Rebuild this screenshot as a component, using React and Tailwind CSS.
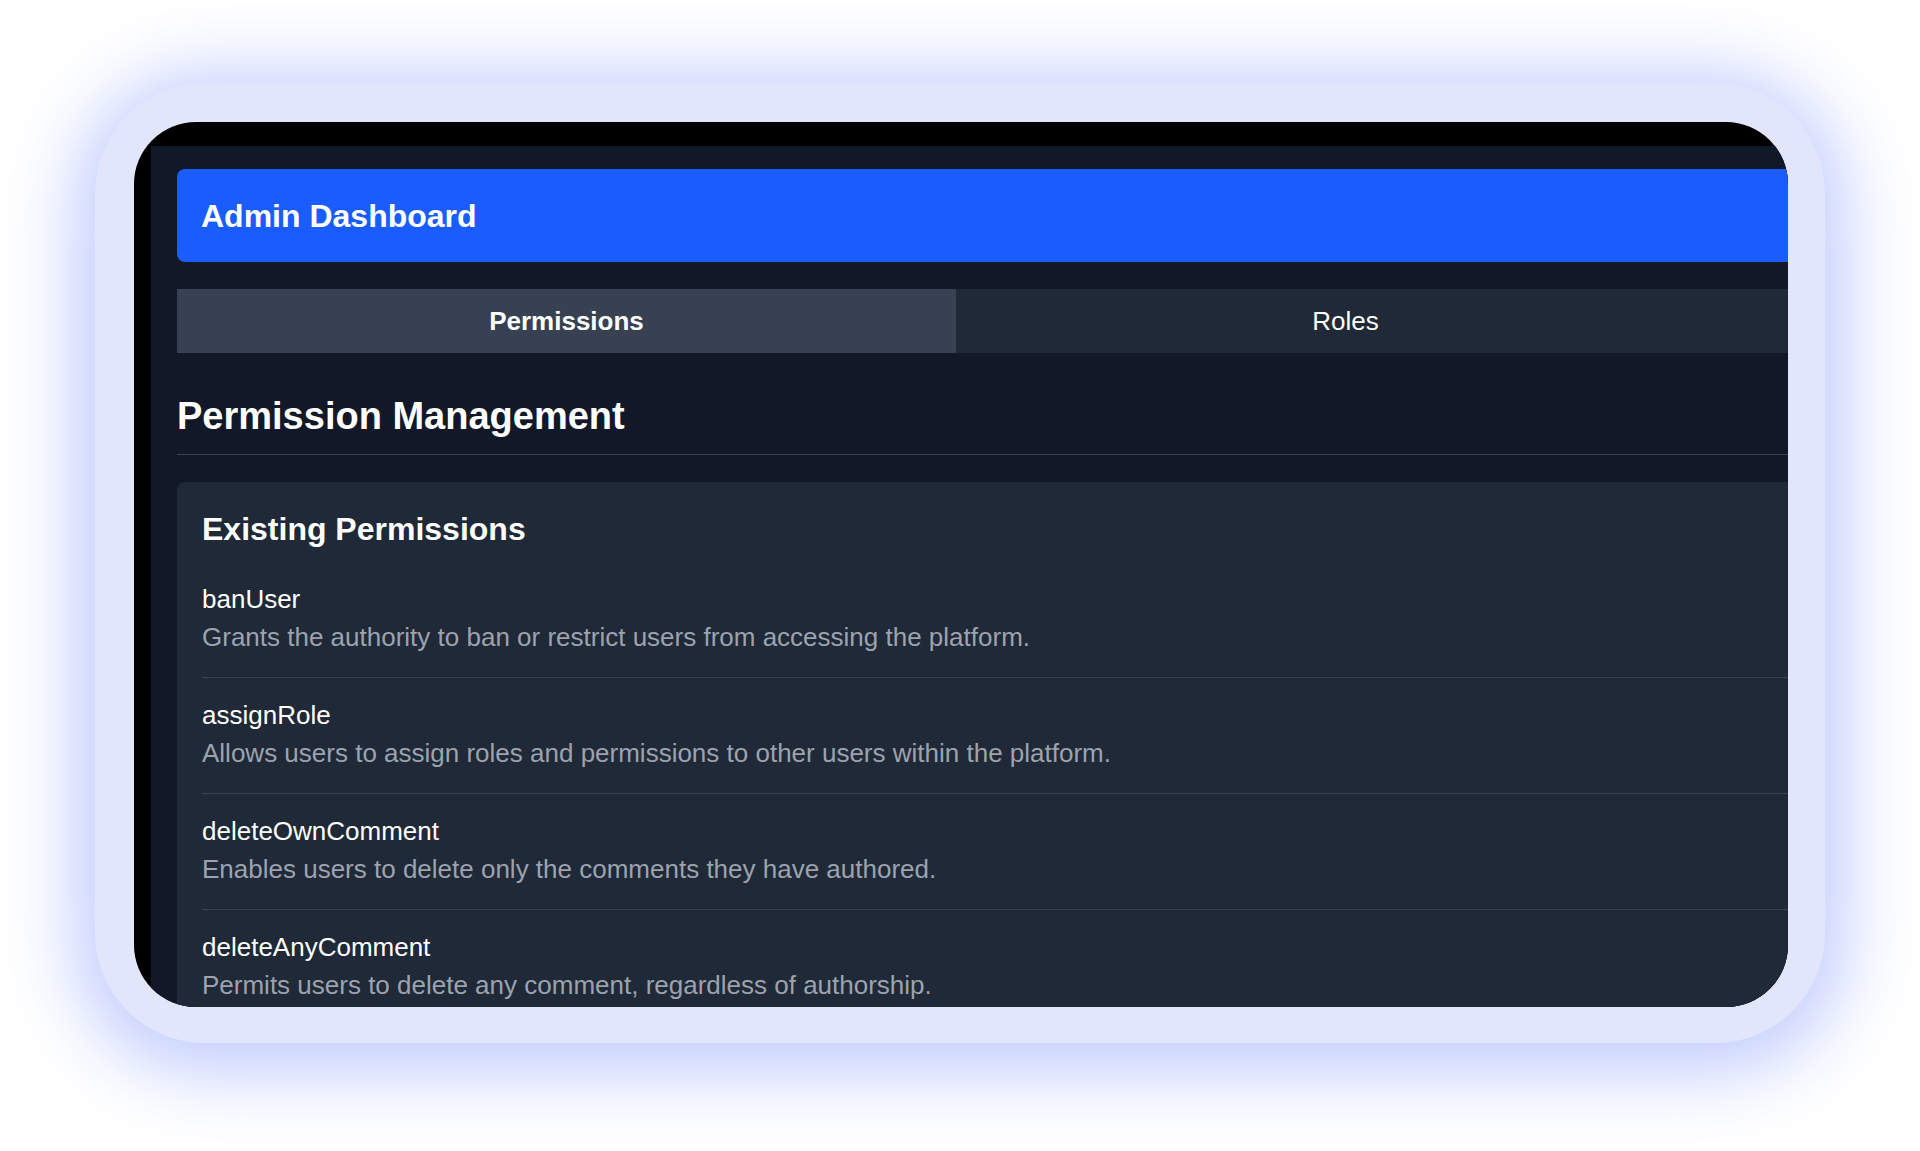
const perms = [
  ["banUser", "Grants the authority to ban or restrict users from accessing the platform."],
  ["assignRole", "Allows users to assign roles and permissions to other users within the platform."],
  ["deleteOwnComment", "Enables users to delete only the comments they have authored."],
  ["deleteAnyComment", "Permits users to delete any comment, regardless of authorship."],
  ["editPost", "Allows users to edit posts."],
];

export default function App() {
  return (
    <div className="w-[1920px] h-[1151px] bg-white overflow-hidden pt-[83px] pl-[95px]" style={{fontFamily: '"Liberation Sans", Arial, sans-serif'}}>
      <div className="w-[1730px] h-[960px] rounded-[110px] bg-[#e1e6fd] shadow-[0_10px_70px_20px_rgba(120,145,255,0.45)] pt-[39px] pl-[39px]">
        <div className="w-[1654px] h-[885px] rounded-[62px] bg-black overflow-hidden pt-[24px] pl-[17px]">
          <div className="w-[1900px] h-full bg-[#111827] pt-[23px] pl-[26px] flex flex-col">
            <div className="shrink-0 h-[93px] bg-[#1a5cff] rounded-l-[8px] flex items-center pl-[24px]">
              <h1 className="text-[32px] font-bold text-white">Admin Dashboard</h1>
            </div>
            <div className="shrink-0 mt-[27px] flex h-[64px]">
              <div className="w-[779px] bg-[#374151] flex items-center justify-center text-[26px] font-bold text-white">Permissions</div>
              <div className="w-[779px] bg-[#1f2937] flex items-center justify-center text-[26px] text-white">Roles</div>
              <div className="flex-1 bg-[#1f2937]" />
            </div>
            <h2 className="shrink-0 mt-[44px] text-[38px] font-bold text-white leading-[38px]">Permission Management</h2>
            <div className="shrink-0 mt-[19px] h-px bg-[#374151]" />
            <div className="mt-[27px] flex-1 bg-[#1f2937] rounded-tl-[8px] pl-[25px] pt-[30px]">
              <h3 className="text-[32px] font-bold text-white leading-[34px]">Existing Permissions</h3>
              <div className="mt-[16px]">
                {perms.map(([name, desc]) => (
                  <div key={name} className="border-b border-[#374151] pt-[18px] pb-[20px]">
                    <div className="text-[26px] text-white leading-[38px]">{name}</div>
                    <div className="text-[26px] text-[#9ca3af] leading-[39px]">{desc}</div>
                  </div>
                ))}
              </div>
            </div>
          </div>
        </div>
      </div>
    </div>
  );
}
